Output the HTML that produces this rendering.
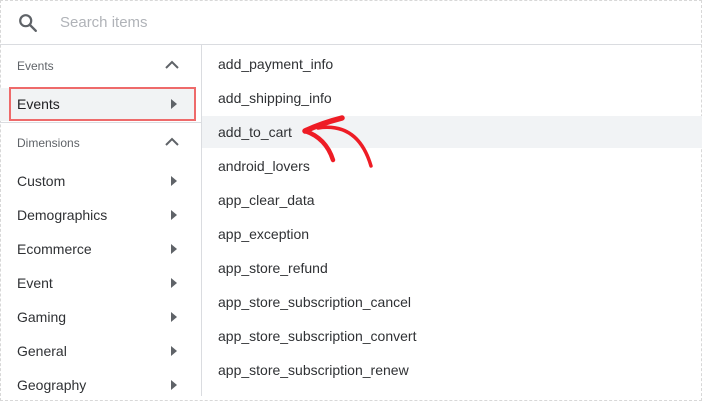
<!DOCTYPE html>
<html><head><style>
*{margin:0;padding:0;box-sizing:border-box}
body{width:702px;height:402px;background:#fff;font-family:"Liberation Sans",Arial,sans-serif;position:relative;overflow:hidden;color:#202124}
.frame{position:absolute;left:0;top:0;width:702px;height:401px;border:1px dashed #d8d8d8}
.search{position:absolute;left:0;top:0;width:702px;height:45px;border-bottom:1px solid #dadce0}
.ph{position:absolute;left:60px;top:14px;font-size:15px;color:#b0b3b8}
.div{position:absolute;left:201px;top:45px;width:1px;height:351px;background:#dadce0}
.l{position:absolute;left:17px;font-size:14px;color:#2f3134}
.h{font-size:12px;color:#5f6368}
.tri{position:absolute;left:171px;width:0;height:0;border-left:6px solid #5f6368;border-top:5px solid transparent;border-bottom:5px solid transparent}
.r{position:absolute;left:218px;font-size:14px;color:#2f3134}
</style></head><body>
<div class="frame"></div>
<div class="search">
<svg style="position:absolute;left:17px;top:12px" width="22" height="22" viewBox="0 0 24 24"><circle cx="9.5" cy="9.5" r="6" fill="none" stroke="#5f6368" stroke-width="2.4"/><path d="M14 14L20.5 20.5" stroke="#5f6368" stroke-width="2.6" stroke-linecap="round"/></svg>
<div class="ph">Search items</div>
</div>
<div class="div"></div>
<div style="position:absolute;left:0;top:88px;width:196px;height:33px;background:#f1f3f4"></div>
<div style="position:absolute;left:9px;top:87px;width:187px;height:34px;border:2px solid #ee6a6a"></div>
<div style="position:absolute;left:0;top:122px;width:201px;height:1px;background:#dadce0"></div>
<div style="position:absolute;left:202px;top:116px;width:500px;height:32px;background:#f1f3f5"></div>

<div class="l h" style="top:59px">Events</div>
<svg style="position:absolute;left:164px;top:60px" width="16" height="10"><path d="M2 8L8 2L14 8" fill="none" stroke="#5f6368" stroke-width="2"/></svg>
<div class="l" style="top:96px;color:#202124">Events</div><div class="tri" style="top:99px"></div>
<div class="l h" style="top:136px">Dimensions</div>
<svg style="position:absolute;left:164px;top:137px" width="16" height="10"><path d="M2 8L8 2L14 8" fill="none" stroke="#5f6368" stroke-width="2"/></svg>
<div class="l" style="top:173px">Custom</div><div class="tri" style="top:176px"></div>
<div class="l" style="top:207px">Demographics</div><div class="tri" style="top:210px"></div>
<div class="l" style="top:241px">Ecommerce</div><div class="tri" style="top:244px"></div>
<div class="l" style="top:275px">Event</div><div class="tri" style="top:278px"></div>
<div class="l" style="top:309px">Gaming</div><div class="tri" style="top:312px"></div>
<div class="l" style="top:343px">General</div><div class="tri" style="top:346px"></div>
<div class="l" style="top:377px">Geography</div><div class="tri" style="top:380px"></div>

<div class="r" style="top:56px">add_payment_info</div>
<div class="r" style="top:90px">add_shipping_info</div>
<div class="r" style="top:124px">add_to_cart</div>
<div class="r" style="top:158px">android_lovers</div>
<div class="r" style="top:192px">app_clear_data</div>
<div class="r" style="top:226px">app_exception</div>
<div class="r" style="top:260px">app_store_refund</div>
<div class="r" style="top:294px">app_store_subscription_cancel</div>
<div class="r" style="top:328px">app_store_subscription_convert</div>
<div class="r" style="top:362px">app_store_subscription_renew</div>

<svg style="position:absolute;left:0;top:0" width="702" height="402">
<g fill="none" stroke="#ee1c25" stroke-linecap="round" stroke-linejoin="round">
<path d="M305 131Q322 123 342 118" stroke-width="5.5"/>
<path d="M305 131Q326 138 333 160" stroke-width="4.5"/>
<path d="M318 128Q358 122 371 166" stroke-width="3.5"/>
</g></svg>
</body></html>
